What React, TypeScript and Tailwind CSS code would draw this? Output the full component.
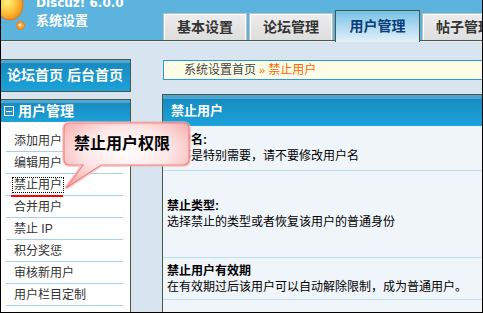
import React from "react";

const tabs = ["基本设置", "论坛管理", "用户管理", "帖子管理"];

const menu = ["添加用户", "编辑用户", "禁止用户", "合并用户", "禁止 IP", "积分奖惩", "审核新用户", "用户栏目定制"];

const rows = [
    { title: "用户名:", desc: "如不是特别需要，请不要修改用户名", h: "h-[45px]" },
    { title: "禁止类型:", desc: "选择禁止的类型或者恢复该用户的普通身份", h: "h-[87px]" },
    { title: "禁止用户有效期", desc: "在有效期过后该用户可以自动解除限制，成为普通用户。", h: "h-[42px]" },
    { title: "", desc: "", h: "h-[40px]" },
];

function Logo() {
    return (
        <svg width="30" height="34" viewBox="0 0 30 34" className="absolute left-0 top-0">
            <defs>
                <radialGradient id="bulb" cx="40%" cy="40%" r="65%">
                    <stop offset="0" stopColor="#fff27a" />
                    <stop offset="0.55" stopColor="#ffc23a" />
                    <stop offset="1" stopColor="#f08a1a" />
                </radialGradient>
            </defs>
            <ellipse cx="9" cy="5" rx="13" ry="15" fill="url(#bulb)" stroke="#e0781a" strokeWidth="1" />
            <circle cx="19.5" cy="25.5" r="4" fill="#f7a23a" stroke="#e27a1c" strokeWidth="1" />
            <circle cx="19" cy="25" r="1.6" fill="#ffe08a" />
        </svg>
    );
}

function Callout() {
    return (
        <div className="absolute left-[60px] top-[120px] w-[134px] h-[72px]">
            <svg width="134" height="72" viewBox="0 0 134 72" className="absolute inset-0">
                <defs>
                    <radialGradient id="tip" cx="50%" cy="42%" r="70%">
                        <stop offset="0" stopColor="#ffffff" />
                        <stop offset="0.5" stopColor="#fde6e6" />
                        <stop offset="1" stopColor="#f6a2a2" />
                    </radialGradient>
                </defs>
                <path
                    d="M9 3 H122 Q128 3 128 9 V39 Q128 45 122 45 H40 L5 68 L22 45 H9 Q3 45 3 39 V9 Q3 3 9 3 Z"
                    fill="none"
                    stroke="#f7b4b4"
                    strokeWidth="4"
                    opacity="0.6"
                />
                <path
                    d="M9 3 H122 Q128 3 128 9 V39 Q128 45 122 45 H40 L5 68 L22 45 H9 Q3 45 3 39 V9 Q3 3 9 3 Z"
                    fill="url(#tip)"
                    stroke="#ef8585"
                    strokeWidth="1.2"
                />
            </svg>
            <span className="absolute left-[13px] top-[14px] text-[16px] leading-[20px] font-bold text-black whitespace-nowrap">
                禁止用户权限
            </span>
        </div>
    );
}

export default function App() {
    return (
        <div className="relative w-[483px] h-[313px] overflow-hidden border-x border-b border-black bg-[#d9e4f1] font-['Liberation_Sans','Noto_Sans_CJK_SC',sans-serif]">
            {/* top bar */}
            <div className="relative flex h-[41px] bg-[#5cb4de] border-b border-[#4b5842]">
                <Logo />
                <div className="w-[162px] shrink-0 pl-[35px] -mt-[4px] flex flex-col text-white font-bold">
                    <span className="text-[12px] leading-[15px] font-['DejaVu_Sans',sans-serif]">Discuz! 6.0.0</span>
                    <span className="text-[13px] leading-[18px] mt-[1px]">系统设置</span>
                </div>
                <div className="flex items-end gap-[2px]">
                    {tabs.map((t) =>
                        t === "用户管理" ? (
                            <div key={t} className="relative z-10 -mb-[2px] w-[85px] h-[32px] shrink-0 flex items-center justify-center border border-[#4b5842] border-b-0 bg-gradient-to-b from-[#74c2e6] to-[#e4f0f9] text-[#0b3c78] text-[14px] font-bold">
                                {t}
                            </div>
                        ) : (
                            <div key={t} className="w-[84px] h-[27px] shrink-0 flex items-center justify-center border border-[#b9c2c8] border-b-0 shadow-[inset_1px_1px_0_#fff,inset_-1px_0_0_#fff] bg-gradient-to-b from-[#ececec] to-[#dedede] text-[#333] text-[14px] font-bold">
                                {t}
                            </div>
                        )
                    )}
                </div>
            </div>

            <div className="flex h-[271px] border-t border-[#e6edf6]">
                {/* left column */}
                <div className="w-[130px] shrink-0 pt-[17px] flex flex-col">
                    <div className="h-[33px] flex items-center pl-[6px] border-y border-r border-[#4b5842] bg-gradient-to-b from-[#1788bd] to-[#1ba2d9] shadow-[inset_0_3px_0_#4fa7cf] text-white text-[14px] font-bold whitespace-nowrap">
                        论坛首页&nbsp;后台首页
                    </div>
                    <div className="mt-[7px] flex-1 flex flex-col border-t border-r border-[#4b5842] bg-white">
                        <div className="h-[22px] flex items-center gap-[4px] pl-[3px] bg-gradient-to-b from-[#1788bd] to-[#1ba2d9] shadow-[inset_0_3px_0_#4fa7cf] text-white text-[14px] font-bold">
                            <span className="w-[10px] h-[10px] border border-white flex items-center justify-center">
                                <span className="w-[6px] h-[1px] bg-white" />
                            </span>
                            用户管理
                        </div>
                        <ul className="pt-[8px] pl-[5px] pr-[7px]">
                            {menu.map((m) => (
                                <li key={m} className="h-[22px] flex items-center pl-[8px] border-b border-[#a9d0ea] text-[12px] text-[#333] whitespace-nowrap">
                                    {m === "禁止用户" ? (
                                        <span className="inline-block -ml-[3px] pl-[2px] pb-px border-b-2 border-[#f00] translate-y-[2px]">
                                            <span className="outline-1 outline-dotted outline-black px-px">{m}</span>
                                        </span>
                                    ) : (
                                        m
                                    )}
                                </li>
                            ))}
                        </ul>
                    </div>
                </div>

                {/* content */}
                <div className="ml-[31px] w-[340px] shrink-0 pt-[18px] flex flex-col">
                    <div className="ml-px h-[28px] flex items-center pl-[20px] border border-[#2a9ad0] bg-[#fdfde7] text-[12px] text-[#444] whitespace-nowrap">
                        系统设置首页
                        <span className="text-[#ff6600] ml-[3px] text-[11px]">»</span>
                        <span className="text-[#ff6600] ml-[3px]">禁止用户</span>
                    </div>
                    <div className="mt-[14px] flex-1 border-t border-l border-[#4b5842] bg-[#f0f5f9]">
                        <div className="h-[31px] flex items-center pl-[8px] bg-gradient-to-b from-[#1788bd] to-[#1ba2d9] shadow-[inset_0_4px_0_#4ba6cf] text-white text-[13px] font-bold">
                            禁止用户
                        </div>
                        {rows.map((r, i) => (
                            <div key={i} className={`${r.h} flex flex-col justify-center pl-[4px] border-b border-[#bcdcf0] text-[12px] leading-[16px] text-black whitespace-nowrap`}>
                                {r.title && <span className="font-bold">{r.title}</span>}
                                {r.desc && <span>{r.desc}</span>}
                            </div>
                        ))}
                    </div>
                </div>
            </div>

            <Callout />
        </div>
    );
}
